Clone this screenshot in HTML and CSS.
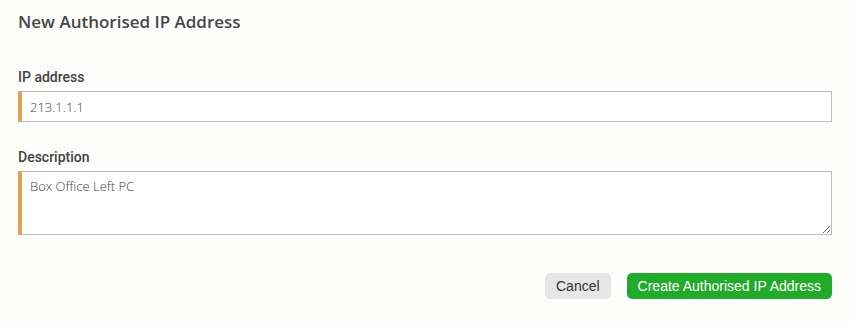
FILE: index.html
```html
<!DOCTYPE html>
<html lang="en">
<head>
    <meta charset="UTF-8">
    <meta name="viewport" content="width=device-width, initial-scale=1.0">
    <title>New Authorised IP Address</title>
    <link rel="stylesheet" href="styles.css">
</head>
<body>
    <div class="modal">
        <h2 class="modal-title">New Authorised IP Address</h2>

        <form class="modal-form">
            <div class="field">
                <label class="field-label" for="ip">IP address</label>
                <input class="field-input" id="ip" type="text" value="213.1.1.1">
            </div>

            <div class="field">
                <label class="field-label" for="desc">Description</label>
                <textarea class="field-input field-textarea" id="desc">Box Office Left PC</textarea>
            </div>

            <div class="actions">
                <button type="button" class="btn btn-cancel">Cancel</button>
                <button type="submit" class="btn btn-primary">Create Authorised IP Address</button>
            </div>
        </form>
    </div>
</body>
</html>
```

FILE: styles.css
```css
* {
    margin: 0;
    padding: 0;
    box-sizing: border-box;
}

body {
    background-color: #fdfdfc;
    color: #444444;
    font-family: 'Open Sans', Arial, sans-serif;
}

.modal {
    padding: 10px 21px 0 18px;
}

.modal-title {
    font-family: 'Open Sans', Arial, sans-serif;
    font-size: 17px;
    font-weight: 600;
    color: #474747;
    line-height: 24px;
    margin-bottom: 35px;
}

.field {
    display: flex;
    flex-direction: column;
    margin-bottom: 27px;
}

.field-label {
    font-family: Roboto, Arial, sans-serif;
    font-size: 14px;
    font-weight: 500;
    color: #444444;
    line-height: 16px;
    margin-bottom: 6px;
}

.field-input {
    width: 100%;
    height: 31px;
    background-color: #ffffff;
    border: 1px solid #bdbdbd;
    border-left: 4px solid #e0a252;
    padding: 0 8px;
    font-family: 'Open Sans', Arial, sans-serif;
    font-size: 13px;
    font-weight: 300;
    color: #3f3f3f;
    outline: none;
}

.field-textarea {
    height: 64px;
    padding: 5px 8px;
    resize: vertical;
    line-height: 18px;
}

.actions {
    display: flex;
    justify-content: flex-end;
    gap: 16px;
    margin-top: 38px;
}

.btn {
    height: 26px;
    border: none;
    border-radius: 5px;
    font-family: 'Liberation Sans', Arial, sans-serif;
    font-size: 14px;
    padding: 0 11px;
    cursor: pointer;
}

.btn-cancel {
    background-color: #e6e6e6;
    color: #333333;
}

.btn-primary {
    background-color: #22aa2a;
    color: #ffffff;
}
```
